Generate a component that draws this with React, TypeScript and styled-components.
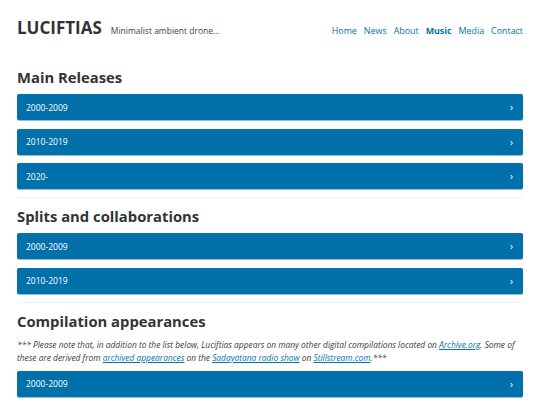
import styled, { createGlobalStyle } from "styled-components";

const GlobalStyle = createGlobalStyle`
  html, body {
    margin: 0;
    padding: 0;
    background: #ffffff;
    font-family: "Open Sans", "Noto Sans", sans-serif;
    color: #333333;
  }
`;

const Page = styled.div`
  width: 540px;
  padding: 0 17px;
  box-sizing: border-box;
`;

const Header = styled.header`
  display: flex;
  align-items: center;
  justify-content: space-between;
  height: 54px;
  margin-bottom: 5px;
`;

const Brand = styled.div`
  display: flex;
  align-items: baseline;
  gap: 9px;
`;

const Title = styled.h1`
  margin: 0;
  font-size: 17px;
  font-weight: 700;
  color: #333333;
`;

const Tagline = styled.span`
  font-size: 8.5px;
  color: #444444;
`;

const Nav = styled.nav`
  display: flex;
  gap: 7px;
  padding-top: 6px;
`;

const NavLink = styled.a<{ active?: boolean }>`
  font-size: 8.9px;
  color: #0073aa;
  text-decoration: none;
  font-weight: ${(p) => (p.active ? 700 : 400)};
`;

const Section = styled.section<{ last?: boolean }>`
  padding-bottom: 8px;
  border-bottom: ${(p) => (p.last ? "none" : "1px solid #f0f0f0")};
`;

const Heading = styled.h2`
  margin: 0;
  padding: 8px 0 7px;
  font-size: 14.8px;
  font-weight: 700;
  line-height: 20px;
  color: #333333;
`;

const List = styled.div`
  display: flex;
  flex-direction: column;
  gap: 8.5px;
`;

const Bar = styled.button`
  display: flex;
  align-items: center;
  justify-content: space-between;
  height: 26px;
  width: 100%;
  padding: 0 10px 0 9px;
  border: none;
  border-radius: 2px;
  background: #0170ab;
  color: #ffffff;
  font-family: inherit;
  font-size: 8.5px;
  cursor: pointer;
  box-shadow: 0 1px 0 #8cc0dc;
`;

const Chevron = styled.span`
  font-size: 10px;
  line-height: 1;
`;

const Note = styled.p`
  margin: 0 0 7px;
  font-size: 8.4px;
  line-height: 13px;
  font-style: italic;
  color: #3a3a3a;
`;

const Link = styled.a`
  color: #0073aa;
  text-decoration: underline;
`;

const navItems = ["Home", "News", "About", "Music", "Media", "Contact"];

const Accordion = ({ items }: { items: string[] }) => (
  <List>
    {items.map((item) => (
      <Bar key={item}>
        <span>{item}</span>
        <Chevron>›</Chevron>
      </Bar>
    ))}
  </List>
);

export default function App() {
  return (
    <Page>
      <GlobalStyle />
      <Header>
        <Brand>
          <Title>LUCIFTIAS</Title>
          <Tagline>Minimalist ambient drone...</Tagline>
        </Brand>
        <Nav>
          {navItems.map((n) => (
            <NavLink key={n} href="#" active={n === "Music"}>
              {n}
            </NavLink>
          ))}
        </Nav>
      </Header>
      <Section>
        <Heading>Main Releases</Heading>
        <Accordion items={["2000-2009", "2010-2019", "2020-"]} />
      </Section>
      <Section>
        <Heading>Splits and collaborations</Heading>
        <Accordion items={["2000-2009", "2010-2019"]} />
      </Section>
      <Section last>
        <Heading>Compilation appearances</Heading>
        <Note>
          *** Please note that, in addition to the list below, Luciftias appears on many other
          digital compilations located on <Link href="#">Archive.org</Link>. Some of these are
          derived from <Link href="#">archived appearances</Link> on the{" "}
          <Link href="#">Sadayatana radio show</Link> on <Link href="#">Stillstream.com</Link>.***
        </Note>
        <Accordion items={["2000-2009", "2010-2019"]} />
      </Section>
    </Page>
  );
}
